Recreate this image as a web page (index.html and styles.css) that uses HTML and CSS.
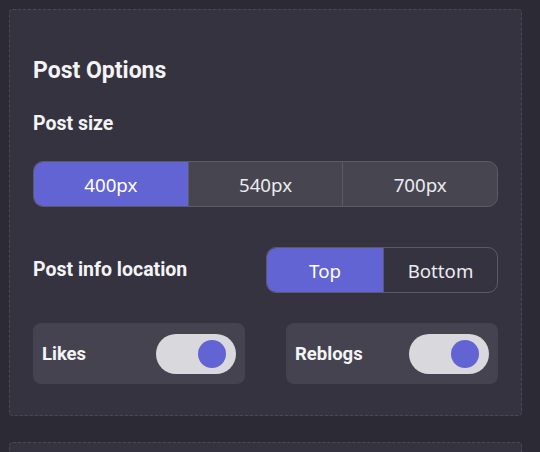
FILE: index.html
```html
<!DOCTYPE html>
<html>
<head>
<meta charset="utf-8">
<link rel="stylesheet" href="styles.css">
</head>
<body>
<div class="page">
  <section class="card">
    <h2 class="title">Post Options</h2>
    <h3 class="label">Post size</h3>
    <div class="seg seg-size">
      <div class="seg-item active">400px</div>
      <div class="seg-item">540px</div>
      <div class="seg-item">700px</div>
    </div>
    <div class="row">
      <h3 class="label inline">Post info location</h3>
      <div class="seg seg-loc">
        <div class="seg-item active">Top</div>
        <div class="seg-item">Bottom</div>
      </div>
    </div>
    <div class="toggles">
      <div class="toggle-box">
        <span class="toggle-label">Likes</span>
        <div class="switch"><div class="knob"></div></div>
      </div>
      <div class="toggle-box">
        <span class="toggle-label">Reblogs</span>
        <div class="switch"><div class="knob"></div></div>
      </div>
    </div>
  </section>
  <section class="card next"></section>
</div>
</body>
</html>
```
FILE: styles.css
```css
html, body {
  margin: 0;
  padding: 0;
  background: #2b2a35;
  overflow: hidden;
  height: 452px;
}
body {
  font-family: Roboto, "Liberation Sans", sans-serif;
  color: #f4f4f6;
}
.page {
  padding: 9px 18px 0 9px;
  display: flex;
  flex-direction: column;
  gap: 26px;
}
.card {
  box-sizing: border-box;
  width: 513px;
  height: 407px;
  flex: none;
  background: #34333f;
  border: 1px dashed #4a4956;
  border-radius: 4px;
  padding: 47px 23px 0 23px;
}
.card.next {
  height: 60px;
}
.title {
  margin: 0;
  font-size: 23px;
  font-weight: 700;
  line-height: 27px;
}
.label {
  margin: 0;
  font-size: 19.5px;
  font-weight: 700;
  line-height: 24px;
}
.title + .label {
  margin-top: 28px;
}
.seg {
  display: flex;
  box-sizing: border-box;
  border: 1px solid #5b5a67;
  border-radius: 10px;
  overflow: hidden;
  font-family: "Noto Sans", "Open Sans", sans-serif;
  font-size: 18.7px;
  color: #ececf0;
}
.seg-size {
  margin-top: 25px;
  height: 46px;
  background: #464550;
}
.seg-item {
  flex: 1;
  display: flex;
  align-items: center;
  justify-content: center;
  border-left: 1px solid #5b5a67;
}
.seg-item:first-child {
  border-left: none;
}
.seg-item.active {
  background: #6364d3;
  color: #ffffff;
}
.row {
  margin-top: 40px;
  display: flex;
  align-items: center;
  justify-content: space-between;
}
.seg-loc {
  width: 232px;
  height: 46px;
}
.seg-loc .seg-item:first-child {
  flex: 0 0 116px;
}
.toggles {
  margin-top: 30px;
  display: flex;
  gap: 41px;
}
.toggle-box {
  box-sizing: border-box;
  width: 212px;
  height: 61px;
  background: #44434f;
  border-radius: 8px;
  padding: 0 9px 0 9px;
  display: flex;
  align-items: center;
  justify-content: space-between;
}
.toggle-label {
  font-size: 18.5px;
  font-weight: 700;
}
.switch {
  width: 80px;
  height: 40px;
  border-radius: 20px;
  background: #d9d8dc;
  box-sizing: border-box;
  display: flex;
  align-items: center;
  justify-content: flex-end;
  padding-right: 10px;
}
.knob {
  width: 28px;
  height: 28px;
  border-radius: 50%;
  background: #6364d3;
}
```
